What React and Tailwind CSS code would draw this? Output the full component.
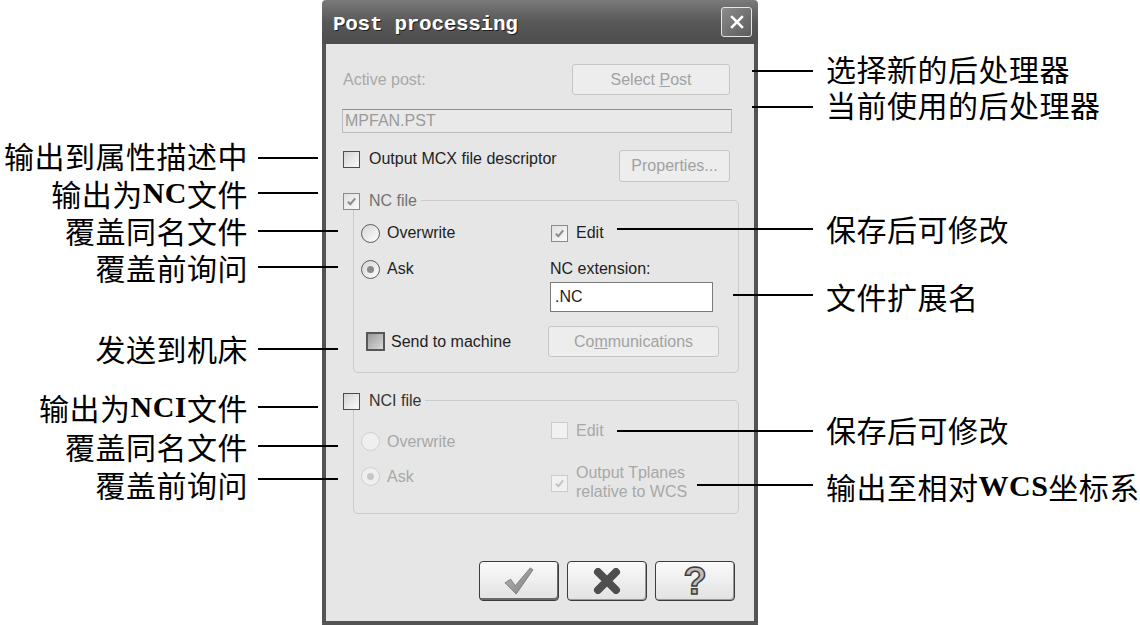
import React from 'react';

const SANS = "font-['Liberation_Sans',Arial,sans-serif]";

const Tick = ({ color }) => (
  <svg viewBox="0 0 12 12" className="w-[11px] h-[11px]">
    <path d="M2 6.2 L4.8 9 L10 2.6" fill="none" stroke={color} strokeWidth="2.3" />
  </svg>
);

const CheckBox = ({ checked, tone = 'normal' }) => {
  const styles = {
    normal: 'w-[17px] h-[17px] border border-[#4d4d4d] bg-linear-to-br from-[#d4d4d4] to-[#fbfbfb]',
    soft: 'w-[17px] h-[17px] border border-[#8a8a8a] bg-linear-to-br from-[#e0e0e0] to-[#fbfbfb]',
    disabled: 'w-[17px] h-[17px] border border-[#cdcdcd] bg-[#f1f1f1]',
    pressed: 'w-[19px] h-[19px] border-2 border-[#575757] bg-linear-to-br from-[#9c9c9c] to-[#d9d9d9]',
  };
  const tickColor = tone === 'disabled' ? '#c4c4c4' : '#8e8e8e';
  return (
    <div className={`${styles[tone]} shrink-0 flex items-center justify-center`}>
      {checked && <Tick color={tickColor} />}
    </div>
  );
};

const Radio = ({ selected, disabled }) => (
  <div
    className={`w-[19px] h-[19px] shrink-0 rounded-full border flex items-center justify-center ${
      disabled ? 'border-[#d0d0d0] bg-[#efefef]' : 'border-[#5c5c5c] bg-linear-to-br from-[#d6d6d6] to-white'
    }`}
  >
    {selected && (
      <div className={`w-[7px] h-[7px] rounded-full ${disabled ? 'bg-[#c6c6c6]' : 'bg-[#8a8a8a]'}`} />
    )}
  </div>
);

const DisabledButton = ({ className, children }) => (
  <div
    className={`${className} shrink-0 border border-[#c6c6c6] rounded-[3px] bg-[#ededed] text-[#a2a2a2] flex items-center justify-center`}
  >
    {children}
  </div>
);

const GroupHeader = ({ checked, tone, label, labelColor }) => (
  <div className="-mt-[9px] -ml-[11px] h-[18px] self-start flex items-center bg-[#e6e6e6] pr-[4px]">
    <CheckBox checked={checked} tone={tone} />
    <span className={`ml-[9px] ${labelColor}`}>{label}</span>
  </div>
);

const BigButton = ({ children, primary }) => (
  <div
    className={`w-[80px] h-[40px] rounded-[4px] border border-[#3c3c3c] bg-linear-to-b from-[#fafafa] to-[#e2e2e2] flex items-center justify-center ${
      primary ? 'shadow-[inset_-1px_-2px_0_#6a6a6a]' : 'shadow-[inset_-1px_-1px_0_#9a9a9a]'
    }`}
  >
    {children}
  </div>
);

function Dialog() {
  return (
    <div className={`w-[436px] h-[625px] shrink-0 flex flex-col ${SANS} text-[16px] text-[#1e1e1e]`}>
      {/* title bar */}
      <div className="h-[44px] shrink-0 rounded-t-[4px] bg-linear-to-b from-[#7a7a7a] via-[#585858] to-[#4d4d4d] flex items-center justify-between pl-[11px] pr-[6px]">
        <span className="pt-[6px] font-['Liberation_Mono',monospace] font-bold text-[21px] tracking-[-0.3px] text-white [text-shadow:1px_1px_0_#1f1f1f]">
          Post processing
        </span>
        <div className="w-[31px] h-[30px] rounded-[3px] border border-[#e6e6e6] bg-linear-to-br from-[#8c8c8c] to-[#5c5c5c] flex items-center justify-center">
          <svg viewBox="0 0 20 20" className="w-[18px] h-[18px]">
            <path d="M3.5 3.5 L16.5 16.5 M16.5 3.5 L3.5 16.5" stroke="white" strokeWidth="3" />
          </svg>
        </div>
      </div>

      {/* body */}
      <div className="flex-1 flex flex-col bg-[#e6e6e6] border-x-4 border-b-4 border-[#545454] pl-[17px] pr-[22px]">
        <div className="mt-[20px] h-[31px] flex items-center justify-between">
          <span className="text-[#a9a9a9]">Active post:</span>
          <DisabledButton className="w-[158px] h-[31px] mr-[2px]">
            <span>
              Select <span className="underline">P</span>ost
            </span>
          </DisabledButton>
        </div>

        <div className="mt-[14px] -ml-px w-[390px] h-[24px] border border-[#bdbdbd] border-t-[#8e8e8e] bg-[#e9e9e9] text-[#9b9b9b] flex items-center pl-[2px]">
          MPFAN.PST
        </div>

        <div className="mt-[17px] flex items-start justify-between">
          <div className="h-[18px] flex items-center">
            <CheckBox />
            <span className="ml-[9px]">Output MCX file descriptor</span>
          </div>
          <DisabledButton className="w-[111px] h-[32px] mr-[2px]">Properties...</DisabledButton>
        </div>

        {/* NC group */}
        <div className="mt-[18px] ml-[10px] w-[386px] border border-[#cbcbcb] rounded-[5px] flex flex-col pb-[15px]">
          <GroupHeader checked tone="soft" label="NC file" labelColor="text-[#727272]" />
          <div className="mt-[13px] h-[20px] flex items-center">
            <div className="w-[197px] pl-[7px] flex items-center">
              <Radio />
              <span className="ml-[7px]">Overwrite</span>
            </div>
            <div className="flex items-center">
              <CheckBox checked tone="soft" />
              <span className="ml-[8px]">Edit</span>
            </div>
          </div>
          <div className="mt-[16px] h-[20px] flex items-center">
            <div className="w-[197px] pl-[7px] flex items-center">
              <Radio selected />
              <span className="ml-[7px]">Ask</span>
            </div>
            <span className="-ml-px">NC extension:</span>
          </div>
          <div className="mt-[3px] flex">
            <div className="w-[196px]" />
            <div className="w-[163px] h-[30px] border border-[#7a7a7a] bg-white flex items-center pl-[4px]">.NC</div>
          </div>
          <div className="mt-[14px] h-[31px] flex items-center">
            <div className="w-[194px] pl-[12px] flex items-center">
              <CheckBox tone="pressed" />
              <span className="ml-[6px]">Send to machine</span>
            </div>
            <DisabledButton className="w-[171px] h-[31px]">
              <span>
                Co<span className="underline">m</span>munications
              </span>
            </DisabledButton>
          </div>
        </div>

        {/* NCI group */}
        <div className="mt-[27px] ml-[10px] w-[386px] border border-[#cbcbcb] rounded-[5px] flex flex-col pb-[12px]">
          <GroupHeader tone="normal" label="NCI file" labelColor="text-[#333]" />
          <div className="flex text-[#a8a8a8]">
            <div className="w-[197px] pl-[7px] flex flex-col">
              <div className="mt-[22px] h-[19px] flex items-center">
                <Radio disabled />
                <span className="ml-[7px]">Overwrite</span>
              </div>
              <div className="mt-[16px] h-[19px] flex items-center">
                <Radio disabled selected />
                <span className="ml-[7px]">Ask</span>
              </div>
            </div>
            <div className="flex flex-col">
              <div className="mt-[12px] h-[17px] flex items-center">
                <CheckBox tone="disabled" />
                <span className="ml-[8px]">Edit</span>
              </div>
              <div className="mt-[24px] flex items-center">
                <div className="mt-[3px]">
                  <CheckBox checked tone="disabled" />
                </div>
                <div className="ml-[8px] leading-[19px]">
                  <div>Output Tplanes</div>
                  <div>relative to WCS</div>
                </div>
              </div>
            </div>
          </div>
        </div>

        {/* bottom buttons */}
        <div className="mt-auto mb-[20px] -mr-[3px] flex justify-end gap-[8px]">
          <BigButton primary>
            <svg viewBox="0 0 32 30" className="w-[30px] h-[28px]">
              <defs>
                <linearGradient id="ck" x1="0" y1="0" x2="1" y2="1">
                  <stop offset="0" stopColor="#b9b9b9" />
                  <stop offset="1" stopColor="#7d7d7d" />
                </linearGradient>
              </defs>
              <polygon points="1,17 7,13 12,20 28,1 31,3 13,29" fill="url(#ck)" stroke="#6e6e6e" strokeWidth="0.8" />
            </svg>
          </BigButton>
          <BigButton>
            <svg viewBox="0 0 28 26" className="w-[28px] h-[26px]">
              <path d="M5 4 L23 22 M23 4 L5 22" stroke="#4e4e4e" strokeWidth="8" strokeLinecap="round" />
            </svg>
          </BigButton>
          <BigButton>
            <span className="font-['Liberation_Sans',sans-serif] font-bold text-[38px] leading-none text-[#bdbdbd] [-webkit-text-stroke:1.5px_#3e3e3e]">
              ?
            </span>
          </BigButton>
        </div>
      </div>
    </div>
  );
}

const LEFT = [
  { text: ['输出到属性描述中'], y: 155, line: 158, end: 318 },
  { text: ['输出为', 'NC', '文件'], y: 193, line: 193, end: 318 },
  { text: ['覆盖同名文件'], y: 230, line: 231, end: 338 },
  { text: ['覆盖前询问'], y: 267, line: 267, end: 338 },
  { text: ['发送到机床'], y: 348, line: 349, end: 338 },
  { text: ['输出为', 'NCI', '文件'], y: 407, line: 407, end: 318 },
  { text: ['覆盖同名文件'], y: 446, line: 446, end: 338 },
  { text: ['覆盖前询问'], y: 484, line: 479, end: 338 },
];

const RIGHT = [
  { text: ['选择新的后处理器'], y: 68, line: 71, start: 752 },
  { text: ['当前使用的后处理器'], y: 104, line: 107, start: 752 },
  { text: ['保存后可修改'], y: 228, line: 229, start: 617 },
  { text: ['文件扩展名'], y: 296, line: 295, start: 733 },
  { text: ['保存后可修改'], y: 429, line: 431, start: 617 },
  { text: ['输出至相对', 'WCS', '坐标系'], y: 486, line: 485, start: 697 },
];

// latin pieces sit at odd indexes
const Label = ({ parts }) =>
  parts.map((p, i) =>
    i % 2 === 1 ? (
      <span key={i} className="font-['Liberation_Serif',serif] font-bold tracking-[0.5px]">
        {p}
      </span>
    ) : (
      <span key={i}>{p}</span>
    )
  );

export default function App() {
  return (
    <div className="relative w-[1140px] h-[625px] overflow-hidden bg-white flex">
      <div className="w-[322px] shrink-0" />
      <Dialog />

      {/* callouts */}
      <div className="absolute inset-0 pointer-events-none font-['Noto_Sans_CJK_SC',sans-serif] text-[30px] tracking-[0.5px] text-black">
        {LEFT.map((c, i) => (
          <React.Fragment key={`l${i}`}>
            <div
              className="absolute left-0 w-[248px] h-[30px] flex items-center justify-end whitespace-nowrap leading-[30px]"
              style={{ top: c.y - 15 }}
            >
              <Label parts={c.text} />
            </div>
            <div className="absolute left-[258px] h-[2px] bg-black" style={{ top: c.line - 1, width: c.end - 258 }} />
          </React.Fragment>
        ))}
        {RIGHT.map((c, i) => (
          <React.Fragment key={`r${i}`}>
            <div
              className="absolute left-[826px] h-[30px] flex items-center whitespace-nowrap leading-[30px]"
              style={{ top: c.y - 15 }}
            >
              <Label parts={c.text} />
            </div>
            <div className="absolute h-[2px] bg-black" style={{ top: c.line - 1, left: c.start, width: 813 - c.start }} />
          </React.Fragment>
        ))}
      </div>
    </div>
  );
}
